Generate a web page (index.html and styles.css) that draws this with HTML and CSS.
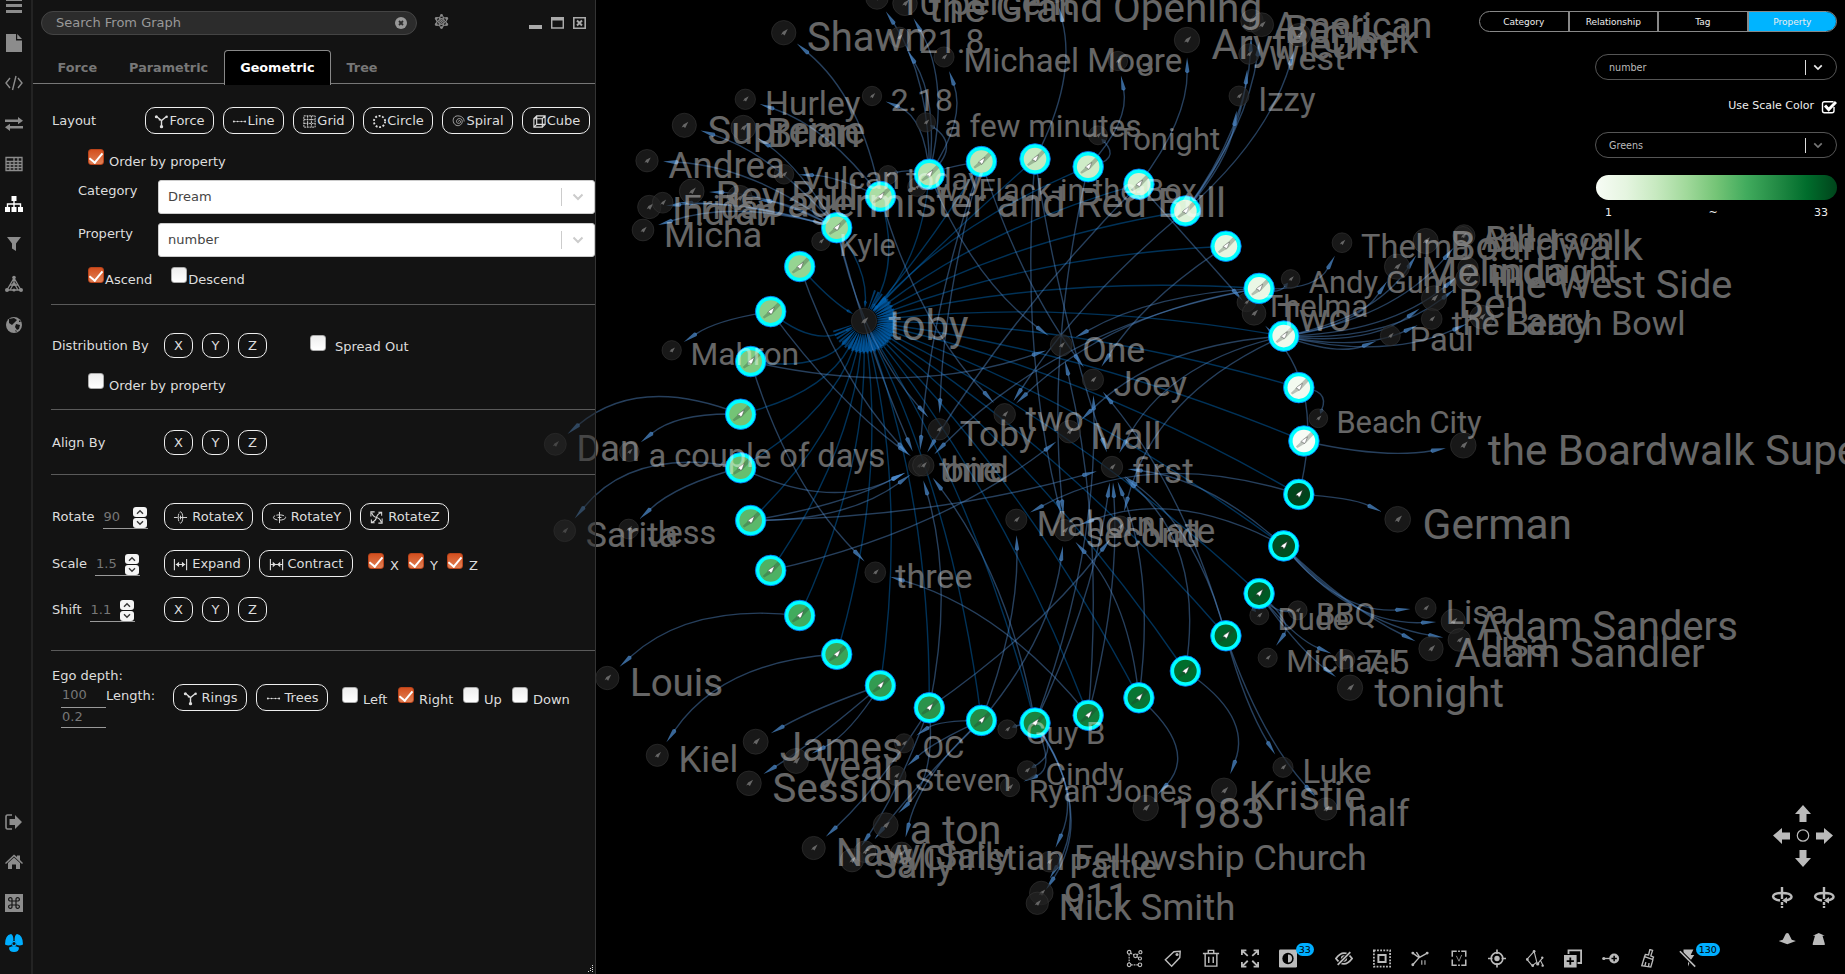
FILE: index.html
```html
<!DOCTYPE html>
<html lang="en">
<head>
<meta charset="utf-8">
<title>Graph layout</title>
<link rel="stylesheet" href="styles.css">
</head>
<body>
<svg class="defs" aria-hidden="true">
  <symbol id="i-force" viewBox="0 0 16 16"><path d="M3 3l5 4 5-4M8 7v6" fill="none" stroke="currentColor" stroke-width="1.5"/><circle cx="2.5" cy="3" r="1.6"/><circle cx="13.5" cy="3" r="1.3"/><circle cx="8" cy="13.5" r="1.8"/><circle cx="6" cy="6" r="1"/></symbol>
  <symbol id="i-line" viewBox="0 0 16 16"><path d="M1 8h14" stroke="currentColor" stroke-width=".6"/><circle cx="2" cy="8" r="1"/><circle cx="6" cy="8" r=".8"/><circle cx="10" cy="8" r=".8"/><circle cx="14" cy="8" r="1"/></symbol>
  <symbol id="i-grid" viewBox="0 0 16 16"><path d="M2 2h12v12H2zM6 2v12M10 2v12M2 6h12M2 10h12" fill="none" stroke="currentColor" stroke-width="1" stroke-dasharray="2 .8"/></symbol>
  <symbol id="i-circle" viewBox="0 0 16 16"><circle cx="8" cy="8" r="6" fill="none" stroke="currentColor" stroke-width="2" stroke-dasharray="2 1.8"/></symbol>
  <symbol id="i-spiral" viewBox="0 0 16 16"><path d="M8 8c0-2 3-1 2 1s-5 1-4-2 6-3 6 1-5 6-8 3-2-9 3-9 7 3 7 6" fill="none" stroke="currentColor" stroke-width=".9" opacity=".8"/></symbol>
  <symbol id="i-cube" viewBox="0 0 16 16"><path d="M2 5h9v9H2zM5 2h9v9H5zM2 5l3-3M11 5l3-3M2 14l3-3M11 14l3-3" fill="none" stroke="currentColor" stroke-width="1.2"/></symbol>
  <symbol id="i-rx" viewBox="0 0 16 16"><ellipse cx="8" cy="8" rx="2.4" ry="6" fill="none" stroke="currentColor" stroke-dasharray="8 1.5"/><path d="M1 8h4M7 8h8M8 6v4" stroke="currentColor"/></symbol>
  <symbol id="i-ry" viewBox="0 0 16 16"><ellipse cx="8" cy="8" rx="6.5" ry="2.8" fill="none" stroke="currentColor" stroke-dasharray="8 1.5"/><path d="M8 2v12M6 8h4" stroke="currentColor"/></symbol>
  <symbol id="i-rz" viewBox="0 0 16 16"><path d="M3 3q1 4 5 5t5 5M13 3q-4 1-5 5t-5 5M2 7V2h4M14 9v5h-4M10 2.5h3.5V6M6 13.5H2.5V10" fill="none" stroke="currentColor" stroke-width="1.1"/></symbol>
  <symbol id="i-expand" viewBox="0 0 16 16"><path d="M1.5 2v12M14.5 2v12M3 8h10" stroke="currentColor" stroke-width="1.2"/><path d="M3 8l3.5-3v6zM13 8L9.5 5v6z"/></symbol>
  <symbol id="i-contract" viewBox="0 0 16 16"><path d="M1.5 2v12M14.5 2v12M2 8h12" stroke="currentColor" stroke-width="1.2"/><path d="M7.5 8L4 5v6zM8.5 8L12 5v6z"/></symbol>
  <symbol id="i-chev" viewBox="0 0 12 8"><path d="M1.5 1.5L6 6l4.5-4.5" fill="none" stroke="currentColor" stroke-width="2"/></symbol>
</svg>

<svg class="graph" id="graph" width="1845" height="974" viewBox="0 0 1845 974"></svg>

<div class="app">
  <nav class="rail">
    <div class="rail-group">
      <svg viewBox="0 0 18 18"><path d="M1 1h16v3H1zM1 7h16v3H1zM1 13h16v3H1z"/></svg>
      <svg viewBox="0 0 18 18"><path d="M1 0h10v6.5h6V18H1zM12.2 0L17 5h-4.8z"/></svg>
      <svg viewBox="0 0 18 18"><path d="M5 4L1 9l4 5M13 4l4 5-4 5M11 2L7.5 16" fill="none" stroke="currentColor" stroke-width="1.4"/></svg>
      <svg viewBox="0 0 18 18"><path d="M0 4.5h13V2l5 3.7-5 3.6V7H0zM18 11H5V8.7L0 12.3 5 16v-2.5h13z"/></svg>
      <svg viewBox="0 0 18 18"><path d="M1 2.500h16v13H1zM1 6.500h16M1 9.500h16M1 12.500h16M5 6v9M9 3v12M13 3v12" fill="none" stroke="currentColor" stroke-width="1.3"/></svg>
      <svg class="active" viewBox="0 0 18 18"><path d="M6.5 1h5v5h-5zM0 12h5v5H0zM6.5 12h5v5h-5zM13 12h5v5h-5z"/><path d="M9 6v6M2.5 12V9h13v3" fill="none" stroke="currentColor" stroke-width="1.4"/></svg>
      <svg viewBox="0 0 18 18"><path d="M2 2h14l-5 6.500V16l-4-2.500v-5z"/></svg>
      <svg viewBox="0 0 18 18"><path d="M9 2v6M9 3L2 15h14L9 3M9 8l-4 7M9 8l4 7M5 10h8" fill="none" stroke="currentColor" stroke-width="1.3"/><circle cx="9" cy="2.5" r="1.8"/><circle cx="2" cy="15" r="2"/><circle cx="16" cy="15" r="2"/><circle cx="9" cy="9" r="1.8"/><circle cx="9" cy="15" r="1.6"/></svg>
      <svg viewBox="0 0 18 18"><circle cx="9" cy="9" r="8"/><path d="M4 3l5-1 3 2-3 3-2 2-3-2zM11 8l4 1-1 4-2 1-2-3zM14 4l2 2-2 0zM10 14l2 1-1 1z" fill="#141414"/></svg>
    </div>
    <div class="rail-group rail-bottom">
      <svg viewBox="0 0 18 18"><path d="M7 2H2.500Q1 2 1 4v10q0 2 1.500 2H7" fill="none" stroke="currentColor" stroke-width="1.6"/><path d="M4.500 6H10V2l7 7-7 7v-4H4.500z"/></svg>
      <svg viewBox="0 0 18 18"><path d="M9 4.500l6 5.500v6h-4v-4.500H7V16H3v-6zM0 10L9 1.500 12 4V2.500h3V7l3 3-1 1-8-7.500L1 11z"/></svg>
      <svg viewBox="0 0 18 18"><path d="M0 0h18v18H0z"/><path d="M7 7h4v4H7zM7 7V5.500A1.700 1.700 0 1 0 5.500 7zM11 7V5.500A1.700 1.700 0 1 1 12.500 7zM7 11v1.500A1.700 1.700 0 1 1 5.500 11zM11 11v1.500a1.700 1.700 0 1 0 1.500-1.500z" fill="none" stroke="#141414" stroke-width="1.2"/></svg>
      <svg class="brand" viewBox="0 0 18 18"><path d="M0 10.500Q0 1 6 0q2.400 1 2.400 6L6 11q-3 1-6-.500zM18 10.500Q18 1 12 0 9.600 1 9.600 6l2.400 5q3 1 6-.500zM4 13.500q5-3 10 0 0 4.500-5 4.500t-5-4.500z"/><circle cx="9" cy="9.500" r="2.200" fill="#141414" stroke="currentColor" stroke-width="1.2"/></svg>
    </div>
  </nav>

  <section class="panel">
    <header class="panel-head">
      <div class="search"><span>Search From Graph</span><svg viewBox="0 0 12 12"><circle cx="6" cy="6" r="6"/><path d="M4 4l4 4M8 4l-4 4" stroke="#2c2c2c" stroke-width="1.8"/></svg></div>
      <svg class="atom" viewBox="0 0 16 16"><g fill="none" stroke="currentColor" stroke-width="1.1"><ellipse cx="8" cy="8" rx="2.6" ry="6.5"/><ellipse cx="8" cy="8" rx="2.6" ry="6.5" transform="rotate(60 8 8)"/><ellipse cx="8" cy="8" rx="2.6" ry="6.5" transform="rotate(120 8 8)"/><circle cx="8" cy="8" r="1"/></g><circle cx="8" cy="1.5" r="1.5"/><circle cx="8" cy="14.5" r="1.5"/><circle cx="2.4" cy="4.8" r="1.5"/><circle cx="13.6" cy="4.8" r="1.5"/><circle cx="2.4" cy="11.2" r="1.5"/><circle cx="13.6" cy="11.2" r="1.5"/></svg>
      <div class="win">
        <svg viewBox="0 0 13 12"><path d="M0 8h13v4H0z"/></svg>
        <svg viewBox="0 0 13 12"><path d="M.7 1h11.6v10H.7z" fill="none" stroke="currentColor" stroke-width="1.5"/><path d="M0 0h13v3.500H0z"/></svg>
        <svg viewBox="0 0 13 12"><path d="M.8.8h11.4v10.4H.8z" fill="none" stroke="currentColor" stroke-width="1.6"/><path d="M4 3.500l5 5M9 3.500l-5 5" stroke="currentColor" stroke-width="2"/></svg>
      </div>
    </header>
    <div class="tabs"><span>Force</span><span>Parametric</span><span class="on">Geometric</span><span>Tree</span></div>

    <div class="body">
      <div class="row row-layout">
        <span class="lbl">Layout</span>
        <div class="btns">
          <button class="w69"><svg><use href="#i-force"/></svg>Force</button>
          <button class="w61"><svg><use href="#i-line"/></svg>Line</button>
          <button class="w61"><svg><use href="#i-grid"/></svg>Grid</button>
          <button class="w70"><svg><use href="#i-circle"/></svg>Circle</button>
          <button class="w71"><svg><use href="#i-spiral"/></svg>Spiral</button>
          <button class="w68"><svg><use href="#i-cube"/></svg>Cube</button>
        </div>
      </div>
      <div class="row row-order"><i class="cb on"></i><span>Order by property</span></div>
      <div class="field"><label>Category</label><div class="select">Dream<b></b><svg><use href="#i-chev"/></svg></div></div>
      <div class="field second"><label>Property</label><div class="select">number<b></b><svg><use href="#i-chev"/></svg></div></div>
      <div class="row row-asc"><i class="cb on"></i><span>Ascend</span><i class="cb"></i><span>Descend</span></div>
      <hr>
      <div class="row row-dist"><span class="lbl">Distribution By</span><div class="btns xyz"><button>X</button><button>Y</button><button>Z</button></div><i class="cb"></i><span class="spread">Spread Out</span></div>
      <div class="row row-order two"><i class="cb"></i><span>Order by property</span></div>
      <hr>
      <div class="row row-align"><span class="lbl">Align By</span><div class="btns xyz"><button>X</button><button>Y</button><button>Z</button></div></div>
      <hr>
      <div class="row row-rot">
        <div class="lead"><span>Rotate</span><div class="num">90<em><svg><use href="#i-chev"/></svg><svg><use href="#i-chev"/></svg></em></div></div>
        <div class="btns wide"><button class="w89"><svg><use href="#i-rx"/></svg>RotateX</button><button class="w89"><svg><use href="#i-ry"/></svg>RotateY</button><button class="w89"><svg><use href="#i-rz"/></svg>RotateZ</button></div>
      </div>
      <div class="row row-scale">
        <div class="lead"><span>Scale</span><div class="num">1.5<em><svg><use href="#i-chev"/></svg><svg><use href="#i-chev"/></svg></em></div></div>
        <div class="btns wide"><button class="w86"><svg><use href="#i-expand"/></svg>Expand</button><button class="w94"><svg><use href="#i-contract"/></svg>Contract</button></div>
        <div class="axes"><i class="cb on"></i><span>X</span><i class="cb on"></i><span>Y</span><i class="cb on"></i><span>Z</span></div>
      </div>
      <div class="row row-shift">
        <div class="lead"><span>Shift</span><div class="num">1.1<em><svg><use href="#i-chev"/></svg><svg><use href="#i-chev"/></svg></em></div></div>
        <div class="btns xyz"><button>X</button><button>Y</button><button>Z</button></div>
      </div>
      <hr>
      <div class="ego">
        <div class="ego-title">Ego depth:</div>
        <div class="ego-row">
          <div class="ego-num">100</div><span class="ego-len">Length:</span>
          <div class="btns wide"><button class="w74"><svg><use href="#i-force"/></svg>Rings</button><button class="w72"><svg><use href="#i-line"/></svg>Trees</button></div>
          <div class="dirs"><i class="cb"></i><span class="d1">Left</span><i class="cb on"></i><span class="d2">Right</span><i class="cb"></i><span class="d3">Up</span><i class="cb"></i><span>Down</span></div>
        </div>
        <div class="ego-num last">0.2</div>
      </div>
    </div>
    <svg class="grip" viewBox="0 0 7 7"><path d="M5 0h1v1H5zM5 2h1v1H5zM5 4h1v1H5zM5 6h1v1H5zM3 3h1v1H3zM3 5h1v1H3zM1 6h1v1H1z"/></svg>
  </section>

  <aside class="legend">
    <div class="seg"><span>Category</span><span>Relationship</span><span>Tag</span><span class="on">Property</span></div>
    <div class="pill bright">number<b></b><svg><use href="#i-chev"/></svg></div>
    <div class="scale-row"><span>Use Scale Color</span><svg viewBox="0 0 16 16"><path d="M12.5 2.700H3.500Q1.500 2.700 1.500 4.700v7q0 2 2 2h7.500q2 0 2-2V8" fill="none" stroke="#fff" stroke-width="1.4"/><path d="M4 6.500l3.700 4L15 3" fill="none" stroke="#fff" stroke-width="3"/></svg></div>
    <div class="pill">Greens<b></b><svg><use href="#i-chev"/></svg></div>
    <div class="gradient"></div>
    <div class="range"><span>1</span><span>~</span><span>33</span></div>
  </aside>

  <div class="pad">
    <svg viewBox="0 0 64 76"><path d="M32 0l8 9h-4.500v8h-7V9H24zM32 62l8-9h-4.500v-8h-7v8H24zM2 30.500L11 23v4.500h8v7h-8V39zM62 30.500L53 23v4.500h-8v7h8V39z"/><circle cx="32" cy="30.5" r="5.7" fill="none" stroke="currentColor" stroke-width="1.2"/></svg>
    <svg viewBox="0 0 64 24"><g id="orb"><path d="M11 1v12M11 16v3M11 20v2" stroke="currentColor" stroke-width="2.4"/><path d="M9 14.500C-1 13 0 7 11 7s13 6 3 7.500" fill="none" stroke="currentColor" stroke-width="2.4"/><path d="M16 11l-5 3.500 5 3z"/></g><use href="#orb" x="42"/></svg>
    <svg viewBox="0 0 64 16"><path d="M11 0q2 0 3 3l3 6 5.500 1.500L11 15-.5 10.500 5 9l3-6q1-3 3-3zM53 0l8 3.500h-3L61 14v2H45v-2l3-10.500h-3z"/></svg>
  </div>

  <div class="tools">
    <svg viewBox="0 0 20 20"><g fill="none" stroke="currentColor" stroke-width="1.3"><circle cx="3.500" cy="3" r="2"/><circle cx="3.500" cy="17" r="2"/><circle cx="15.500" cy="17" r="2"/><circle cx="16" cy="3" r="1.7"/><circle cx="10.500" cy="7" r="2"/><circle cx="15.500" cy="10" r="1.7"/><path d="M3.500 5v10M5.500 17h8M5 4l4 2M12 6l3-2M12 8l2 1" stroke-dasharray="2 1"/></g></svg>
    <svg viewBox="0 0 20 20"><path d="M1.500 11.500L11 2.500l7-.500-.500 7-9 9.500z" fill="none" stroke="currentColor" stroke-width="1.6"/><circle cx="14.500" cy="5.500" r="1.7"/></svg>
    <svg viewBox="0 0 20 20"><path d="M1 4.500h18M3.500 5v13.500h13V5M7 4V1h6v3M7.500 8v7M12.500 8v7" fill="none" stroke="currentColor" stroke-width="1.6"/></svg>
    <svg viewBox="0 0 20 20"><path d="M1 6V1h5M14 1h5v5M19 14v5h-5M6 19H1v-5M1.500 1.500L7.500 7M18.500 1.500L12.500 7M1.500 18.500l6-6M18.500 18.500l-6-6" fill="none" stroke="currentColor" stroke-width="2"/></svg>
    <div class="with-badge"><svg viewBox="0 0 20 20"><rect width="20" height="20" rx="1.5"/><circle cx="10" cy="10" r="6.3" fill="#000"/><path d="M10 5.500a4.500 4.500 0 0 1 0 9z"/></svg><span class="badge">33</span></div>
    <svg class="gap" viewBox="0 0 20 20"><path d="M1 10q9-12 18 0-9 12-18 0z" fill="none" stroke="currentColor" stroke-width="2"/><circle cx="10" cy="10" r="3.5"/><path d="M3 17L17 3" stroke="#000" stroke-width="4"/><path d="M3 17L17 3" stroke="currentColor" stroke-width="2"/></svg>
    <svg viewBox="0 0 20 20"><path d="M1 1h18v18H1z" fill="none" stroke="currentColor" stroke-width="2" stroke-dasharray="2 1.5"/><path d="M6 6h8v8H6z" fill="none" stroke="currentColor" stroke-width="2.2"/></svg>
    <svg viewBox="0 0 20 20"><path d="M2 4l7 5 9-5M9 9l-7 8M6 3l4 6" fill="none" stroke="currentColor" stroke-width="1.5"/><circle cx="2" cy="4" r="1.6"/><circle cx="18" cy="4" r="1.6"/><circle cx="2" cy="17" r="1.6"/><path d="M12 12v5M15.500 12v5" stroke="currentColor" stroke-width="1.2"/></svg>
    <svg viewBox="0 0 20 20"><path d="M7.500 2H2.500v6M2.500 11v6.500H7.500M12.500 2h5v6M17.500 11v6.500H12.500M9 17.500h2M9 2h2" fill="none" stroke="currentColor" stroke-width="1.7"/><path d="M7 7l3 6 3-7" fill="none" stroke="currentColor" stroke-width=".8"/></svg>
    <svg viewBox="0 0 20 20"><circle cx="10" cy="10" r="6.5" fill="none" stroke="currentColor" stroke-width="1.8"/><circle cx="10" cy="10" r="3"/><path d="M10 0v5M10 15v5M0 10h5M15 10h5" stroke="currentColor" stroke-width="1.8"/></svg>
    <svg viewBox="0 0 20 20"><path d="M1 11L9 2l3 12-5 4z" fill="none" stroke="currentColor" stroke-width="1.2"/><circle cx="9" cy="2" r="1.5"/><circle cx="1.500" cy="11" r="1.5"/><circle cx="7.500" cy="18" r="1.5"/><path d="M13 16l3-4 3-3M16 12l3 6" stroke="currentColor" stroke-width="1.2"/><circle cx="13" cy="16" r="1.8"/><circle cx="18" cy="9" r="1.3"/><circle cx="18.500" cy="18" r="1.3"/></svg>
    <svg viewBox="0 0 20 20"><path d="M5 5V1h14v14h-4" fill="none" stroke="currentColor" stroke-width="2"/><path d="M0 6h14v14H0zM6 9v3H3v2h3v3h2v-3h3v-2H8V9z" fill-rule="evenodd"/></svg>
    <svg viewBox="0 0 20 20"><circle cx="13.500" cy="10" r="5.5"/><path d="M2 10h7" stroke="currentColor" stroke-width="1.5"/><circle cx="2" cy="10" r="1.8"/><path d="M13.500 7v6M10.500 10h6" stroke="#000" stroke-width="1.7"/></svg>
    <svg viewBox="0 0 20 20"><path d="M14 1l-2 6 3 1.500-1 2.500-9-3 1-2.500 3.500.5L11 0zM5 8L2 18l10 1.500 2.500-8.500M6.500 14l-1 4M10 15l-.5 4" fill="none" stroke="currentColor" stroke-width="1.5"/></svg>
    <div class="with-badge"><svg viewBox="0 0 20 20"><path d="M5 0h11l-3 6h4l-4 6-3 7v-8L5 6z"/><path d="M1 2l17 17" stroke="#000" stroke-width="4"/><path d="M1 2l17 17" stroke="currentColor" stroke-width="1.8"/></svg><span class="badge">130</span></div>
  </div>
</div>
<script src="graph.js"></script>
</body>
</html>
```
FILE: styles.css
```css
* { box-sizing: border-box; }
body { margin: 0; background: #000; color: #ddd; font: 13px/16px "DejaVu Sans", sans-serif; overflow: hidden; width: 1845px; height: 974px; position: relative; }
svg { fill: currentColor; flex: none; display: block; }
.defs { position: absolute; width: 0; height: 0; }
.graph { position: absolute; left: 0; top: 0; }
.graph text { font-family: Roboto, sans-serif; }
.app { position: relative; display: flex; height: 974px; }

.rail { width: 33px; background: rgba(38,38,38,.5); border-right: 2px solid #232323; display: flex; flex-direction: column; justify-content: space-between; color: #8c8c8c; }
.rail-group { display: flex; flex-direction: column; align-items: center; gap: 22.2px; margin-top: -3px; width: 28px; }
.rail-group svg { width: 18px; height: 18px; }
.rail-group:first-child svg:first-child { margin-bottom: -3px; }
.rail-bottom { gap: 22.5px; margin-bottom: 22px; }
.rail .active { color: #fff; }
.rail .brand { color: #00aeff; }

.panel { width: 563px; background: rgba(38,38,38,.5); border-right: 1px solid #333; position: relative; }
.panel-head { display: flex; align-items: center; height: 45px; padding-left: 8px; }
.search { width: 376px; height: 24px; border: 1px solid #444; border-radius: 12px; background: #2c2c2c; color: #999; display: flex; align-items: center; justify-content: space-between; padding: 1px 9px 0 14px; }
.search svg { width: 12px; height: 12px; }
.atom { width: 15px; height: 15px; margin: 0 0 2px 17px; color: #888; }
.win { display: flex; gap: 9px; margin-left: 80px; color: #aaa; }
.win svg { width: 13px; height: 12px; }
.tabs { height: 39px; padding: 5px 0 0 8.5px; display: flex; border-bottom: 1px solid #777; font-weight: bold; font-size: 12.8px; color: #777; }
.tabs span { height: 35px; padding: 9px 15px; border: 1px solid transparent; border-bottom: 0; }
.tabs .on { background: #000; color: #fff; border-color: #888; border-radius: 4px 4px 0 0; }

.body { padding-left: 18px; }
.body hr { border: 0; height: 1px; background: #5a5a5a; margin: 0; }
.row { display: flex; align-items: center; }
.lbl { width: 113px; padding-left: 1px; }
.btns { display: flex; gap: 9px; }
button { font: inherit; color: #ddd; background: none; border: 1px solid #eee; border-radius: 10px; height: 27px; padding: 1px 0 0; display: flex; align-items: center; justify-content: center; }
button svg { width: 15px; height: 15px; }
.wide button { gap: 4px; }
.xyz button { height: 25px; width: 29px; }
.xyz button:nth-child(2) { width: 27px; }
.w61 { width: 61px; } .w68 { width: 68px; } .w69 { width: 69px; } .w70 { width: 70px; } .w71 { width: 71px; }
.w72 { width: 72px; } .w74 { width: 74px; } .w86 { width: 86px; } .w89 { width: 89px; } .w94 { width: 94px; }
.row-layout { margin-top: 23px; height: 27px; }
.row-layout .lbl { width: 94px; }
.cb { flex: none; width: 16px; height: 16px; border-radius: 3px; background: linear-gradient(#ededed, #fff); border: 1px solid #aaa; margin-bottom: 5px; display: block; }
.cb.on { background: linear-gradient(#d4501f, #e08055); border-color: #b9441b; display: grid; place-items: center; }
.cb.on::after { content: ""; width: 6px; height: 11px; border: solid #fff; border-width: 0 2px 2px 0; transform: translateY(-1px) rotate(40deg); }
.row-order { padding-left: 37px; gap: 5px; margin-top: 15px; height: 21px; }
.row-order span { padding-top: 4px; }
.field { display: flex; margin-top: 10px; padding-left: 27px; height: 34px; }
.field label { width: 80px; padding-top: 3px; }
.field.second { margin-top: 9px; }
.select { flex: 1; background: #fff; color: #444; border: 1px solid #ccc; border-radius: 3px; display: flex; align-items: center; padding-left: 9px; }
.select b { width: 1px; height: 18px; background: #ccc; margin-left: auto; }
.select svg { width: 12px; height: 8px; margin: 0 10px; color: #ccc; }
.row-asc { padding-left: 37px; margin-top: 10px; height: 21px; }
.row-asc span { padding: 4px 19px 0 1px; }
.row-asc + hr { margin-top: 16px; }
.row-dist { height: 25px; margin-top: 28px; }
.row-dist .cb { margin-left: 43px; }
.spread { padding: 3px 0 0 9px; }
.row-order.two { margin-top: 15px; }
.row-order.two + hr { margin-top: 15px; }
.row-align { height: 25px; margin-top: 20px; }
.row-align + hr { margin-top: 19px; }
.lead { width: 113px; display: flex; padding-left: 1px; gap: 9px; align-items: center; }
.num { width: 45px; height: 24px; border-bottom: 1px solid #999; color: #777; padding: 4px 1px 0; display: flex; justify-content: space-between; }
.num em { width: 14px; height: 21px; display: flex; flex-direction: column; gap: 1px; margin-top: -2px; }
.num em svg { width: 14px; height: 10px; background: #f4f4f4; border-radius: 3px; padding: 2px 3px; color: #333; }
.num em svg:first-child { transform: scaleY(-1); }
.row-rot { height: 27px; margin-top: 28px; }
.row-rot .num, .row-scale .num, .row-shift .num { margin-left: -1px; }
.row-scale { height: 27px; margin-top: 20px; }
.row-shift { height: 25px; margin-top: 20px; }
.row-shift + hr { margin-top: 28px; }
.axes, .dirs { display: flex; align-items: center; }
.axes { padding-left: 15px; }
.axes span { width: 24px; padding: 5px 0 0 6px; }
.axes span:nth-of-type(2) { width: 23px; }
.ego { padding-top: 17px; }
.ego-title { padding-left: 1px; }
.ego-row { display: flex; height: 27px; align-items: center; }
.ego-num { width: 45px; height: 24px; margin-left: 10px; border-bottom: 1px solid #999; color: #777; padding: 3px 1px 0; }
.ego-num.last { height: 21px; margin-top: -4px; padding-top: 2px; }
.ego-row .ego-num { margin-top: -3px; }
.ego-len { width: 67px; margin-top: -3px; }
.dirs { padding-left: 14px; }
.dirs span { padding: 5px 0 0 5px; }
.d1 { width: 40px; } .d2 { width: 49px; } .d3 { width: 33px; }
.grip { position: absolute; right: 1px; bottom: 2px; width: 7px; height: 7px; }

.legend { margin: 11px 8px 0 auto; display: flex; flex-direction: column; align-items: flex-end; height: 210px; color: #eee; }
.seg { display: flex; width: 358px; height: 21px; border: 1px solid #888; border-radius: 11px; overflow: hidden; font-size: 9px; line-height: 21px; text-align: center; }
.seg span { flex: 1; border-right: 2px solid #888; }
.seg .on { background: #00b4ff; border: 0; }
.pill { width: 242px; height: 26px; border: 1px solid #555; border-radius: 13px; display: flex; align-items: center; padding: 1px 0 0 13px; font-size: 9.6px; color: #bbb; }
.pill.bright { margin-top: 22px; }
.pill b { width: 1px; height: 15px; background: #ddd; margin-left: auto; }
.pill svg { width: 10px; height: 7px; margin: 0 13px 0 7px; color: #777; }
.pill.bright svg { color: #eee; }
.scale-row { display: flex; align-items: center; height: 16px; margin: 18px 0; font-size: 11px; gap: 7px; }
.scale-row svg { width: 16px; height: 16px; margin-top: 2px; }
.gradient { width: 241px; height: 25px; border-radius: 12.5px; margin-top: 17px; background: linear-gradient(90deg,#f7fcf5,#e5f5e0,#c7e9c0,#a1d99b,#74c476,#41ab5d,#238b45,#006d2c,#00441b); }
.range { width: 241px; padding: 5px 9px 0; display: flex; justify-content: space-between; font-size: 11px; }

.pad { position: absolute; right: 10px; top: 805px; width: 64px; display: flex; flex-direction: column; color: #bbb; }
.pad svg { width: 64px; }
.pad svg:nth-child(1) { height: 76px; }
.pad svg:nth-child(2) { height: 24px; margin-top: 5px; }
.pad svg:nth-child(3) { height: 12px; margin-top: 23px; }
.pad svg:nth-child(3) { width: 64px; }
.tools { position: absolute; left: 1126px; top: 949px; display: flex; gap: 20.2px; color: #bbb; }
.tools svg { width: 18px; height: 19px; }
.with-badge { position: relative; }
.gap { margin-left: 18px; }
.badge { position: absolute; left: 17px; top: -6px; background: #00aeff; color: #000; border-radius: 7px; font-size: 9.5px; line-height: 13px; padding: 0 3px; }
```
FILE: graph.js
```js
const svg = document.getElementById('graph');
const CX = 1021.6, CY = 441, R = 282.3, N = 33;
const ring = [...Array(N)].map((_, i) => {
  const a = -i * 2 * Math.PI / N;
  return [CX + R * Math.cos(a), CY + R * Math.sin(a)];
});

// id: [x, y, label size, label]
const nodes = {
  shawn: [783.7, 32.7, 39.9, 'Shawn'], hurley: [745.3, 99.3, 33.6, 'Hurley'],
  supreme: [684.3, 125.3, 39.7, 'Supreme'], brian: [743.3, 127.7, 40.6, 'Brian'],
  andrea: [647, 160.7, 36.7, 'Andrea'], rey: [691.7, 191.3, 40.5, 'Rey Bull'],
  jager: [739.6, 198, 41.5, 'Jagermister and Red Bull'],
  indian: [649.3, 207, 38.5, 'Indian'], friday: [662.7, 202.7, 34, 'Friday'],
  micha: [643, 230, 35.9, 'Micha'], kyle: [821, 241.3, 30.6, 'Kyle'],
  vulcan: [784, 174.3, 32, 'Vulcan'], today: [888, 175, 31.2, 'today'],
  jack: [917, 187, 30.8, 'w/ Flack-in-the-Box'],
  v218: [872, 96, 31.9, '2.18'], v21: [899.3, 37.3, 33.6, '21.8'],
  moore: [944, 57, 33, 'Michael Moore'], few: [926, 122.3, 31.5, 'a few minutes'],
  ten: [877, -2, 37, '10 percent'], opening: [905, 3.3, 40.4, 'the Grand Opening'],
  top: [1055, -8, 35, ''], n3: [1118, 61, 31.8, '3'],
  ary: [1187, 40, 41.6, 'Arytheum'], american: [1252, 20.7, 37.2, 'American'],
  benji: [1261.7, 24.7, 39, 'Benji'], creek: [1299, 35, 38, 'Creek'],
  west: [1249, 54, 33.9, 'West'], izzy: [1239, 96, 32.9, 'Izzy'],
  tonight1: [1098, 135.3, 31, 'Tonight'], thelma1: [1342, 242.7, 32.5, 'Thelma'],
  andy: [1290.7, 279, 30.9, 'Andy Gunn'], thelma2: [1246.5, 302.3, 31, 'Thelma'],
  Two: [1254, 313.3, 39, 'Two'], mahron: [671.7, 350.3, 31.8, 'Mahron'],
  dan: [555.3, 444.3, 36.2, 'Dan'], couple: [629.3, 451.7, 32.6, 'a couple of days'],
  sarita: [564.7, 530.7, 35.7, 'Sarita'], jess: [628.7, 529, 32.4, 'Jess'],
  third: [919, 465.7, 34.5, 'third'], one2: [923.3, 465.3, 35, 'one'],
  Toby: [939, 429.3, 35.3, 'Toby'], two: [1004.7, 414.3, 35.3, 'two'],
  mall: [1069.3, 431.7, 37, 'Mall'], one: [1061.3, 345.3, 35.6, 'One'],
  joey: [1093, 379.7, 34.7, 'Joey'], first: [1112, 467, 35.2, 'first'],
  mahorn: [1016.3, 519.7, 34.8, 'Mahorn'], second: [1065, 530.3, 35.3, 'second'],
  nate: [1120, 526.7, 35.3, 'Nate'], beach: [1318.3, 418.3, 30.8, 'Beach City'],
  super: [1463.3, 445.3, 42.1, 'the Boardwalk Superstore'],
  german: [1397.7, 519.3, 42.4, 'German'], dude: [1259.3, 615.3, 31, 'Dude'],
  bbq: [1297.7, 610.3, 31, 'BBQ'], lisa: [1425.7, 608, 34, 'Lisa'],
  sanders: [1453.3, 621.3, 40, 'Adam Sanders'], lisa2: [1459.3, 640, 37, 'Lisa'],
  sandler: [1431, 648.7, 40, 'Adam Sandler'], michael: [1267.7, 657.7, 31.5, 'Michael'],
  v75: [1345, 659.3, 32.5, '7.5'], tonight: [1350, 687.7, 41.5, 'tonight'],
  luke: [1283, 767.3, 33, 'Luke'], kristie: [1224, 790.7, 41.5, 'Kristie'],
  half: [1326, 809, 36.6, 'half'], y1983: [1145.7, 808, 42, '1983'],
  cindy: [1027, 770.3, 31.5, 'Cindy'], ryan: [1010, 787, 31.9, 'Ryan Jones'],
  guy: [1007.3, 729.3, 31, 'Guy B'], pattie: [1049.3, 861.7, 33.9, 'Pattie'],
  n911: [1041.3, 893, 38.6, '911'], nick: [1037.3, 903.3, 36.6, 'Nick Smith'],
  church: [901.7, 853, 35.9, 'Christian Fellowship Church'],
  louis: [607.3, 678, 38.5, 'Louis'], kiel: [657.3, 755.3, 36.3, 'Kiel'],
  james: [755.7, 741.7, 40.9, 'James'], year: [796, 761, 41, 'year'],
  session: [749, 783.3, 40.2, 'Session'], oc: [904, 743.3, 31.4, 'OC'],
  steven: [896.3, 775.7, 32, 'Steven'], aton: [885.7, 825.3, 41, 'a ton'],
  navy: [813.7, 848, 38, 'Navy'], sally: [852, 860.3, 38, 'Sally'],
  wsally: [865, 851.7, 35.5, 'w/ Sally'], three: [875.3, 572.3, 34, 'three'],
  boardwalk: [1425.7, 241, 41.3, 'Boardwalk'], bill: [1464, 235.7, 36, 'Bill'],
  anderson: [1463, 236, 31, 'Anderson'],
  melinda: [1397, 266.7, 41.4, 'Melinda'], midnight: [1468, 267.7, 33.3, 'midnight'],
  westside: [1467.7, 279, 39.7, 'the West Side'], ben: [1434, 298.3, 41.2, 'Ben'],
  bowl: [1431.7, 319, 34.1, 'the Beach Bowl'], larry: [1481.7, 317, 38.6, 'Larry'],
  paul: [1390.3, 335.7, 32.7, 'Paul'], toby: [864, 321, 41.7, 'toby']
};

// ring index: "target:bend ..."
const links = {
  0: 'super:16', 1: 'beach:-26',
  2: 'paul:20 melinda:30 boardwalk:36 bill:38 ben:30 midnight:34 westside:36 bowl:24 larry:34 mall:44 nate:60 first:50',
  3: 'thelma1:30 andy:12 one:24 two:44 one2:60',
  4: 'joey:20', 5: 'izzy:18 west:24 american:30 benji:26 creek:30 two:20',
  6: 'ary:26 Two:0 third:20', 7: 'n3:28 tonight1:30 second:30', 8: 'top:32 second:30 first:14',
  9: 'jack:8 Toby:16 third:20 joey:20',
  10: 'ten:28 opening:34 v21:24 moore:30 few:34 v218:30 today:6 one:30',
  11: 'shawn:34 hurley:26 vulcan:10 two:30', 12: 'supreme:26 brian:14 andrea:30 rey:16 indian:18 friday:12 micha:30 jager:10 Toby:30 third:10',
  13: 'third:24', 14: 'mahron:12 one2:16', 15: 'three:30 one:44', 16: 'dan:56 couple:22',
  17: 'sarita:56 jess:16 third:44', 18: 'one2:30 third:14 first:24', 19: 'mall:36',
  20: 'louis:46', 21: 'kiel:50', 22: 'james:6 session:-6 year:-16',
  23: 'navy:-12 sally:-10 aton:-30 third:30 nate:20', 24: 'oc:12 steven:8 wsally:6 church:24 mahorn:20 second:30',
  25: 'guy:2 cindy:-30 ryan:-36 pattie:-40 n911:-54 nick:-60 first:20 joey:34 one2:34',
  26: 'one:30 three:40 first:20', 27: 'y1983:-56 first:30 second:30', 28: 'kristie:-50 first:60',
  29: 'luke:10 half:20 joey:30 first:36', 30: 'dude:10 bbq:12 michael:-30 v75:14 tonight:10',
  31: 'lisa:40 sanders:46 lisa2:34 sandler:14 first:30 second:50',
  32: 'german:-10 mahorn:60 Two:50'
};

const greens = ['#f7fcf5', '#e5f5e0', '#c7e9c0', '#a1d99b', '#74c476', '#41ab5d', '#238b45', '#006d2c', '#00441b']
  .map(h => [1, 3, 5].map(k => parseInt(h.slice(k, k + 2), 16)));
const shade = t => {
  const p = Math.min(t * 8, 7.999), k = Math.floor(p), f = p - k;
  return 'rgb(' + greens[k].map((c, j) => Math.round(c + (greens[k + 1][j] - c) * f)) + ')';
};

// Quadratic curve from a to b, bent sideways by `bend` px, ending in a cone.
function curve(a, b, bend, gap, len, half, [line, cone]) {
  const dx = b[0] - a[0], dy = b[1] - a[1], d = Math.hypot(dx, dy);
  const c = [(a[0] + b[0]) / 2 - dy / d * bend, (a[1] + b[1]) / 2 + dx / d * bend];
  const q = Math.hypot(b[0] - c[0], b[1] - c[1]);
  const u = [(b[0] - c[0]) / q, (b[1] - c[1]) / q];
  const tip = [b[0] - u[0] * gap, b[1] - u[1] * gap];
  const base = [tip[0] - u[0] * len, tip[1] - u[1] * len];
  const e = [-u[1] * half, u[0] * half];
  const f = v => v.toFixed(1);
  return `<path d="M${f(a[0])} ${f(a[1])}Q${f(c[0])} ${f(c[1])} ${f(base[0])} ${f(base[1])}" fill="none" stroke="${line}" stroke-width="1.4"/>` +
    `<path d="M${f(tip[0])} ${f(tip[1])}L${f(base[0] + e[0])} ${f(base[1] + e[1])}Q${f(base[0] - u[0] * 3)} ${f(base[1] - u[1] * 3)} ${f(base[0] - e[0])} ${f(base[1] - e[1])}Z" fill="${cone}"/>`;
}

let edges = '', dots = '', labels = '', sel = '';
ring.forEach((p, i) => {
  const bend = i < 8 ? 29 : i === 8 ? 4 : i === 9 ? -8 : i < 12 ? -28 : i === 12 ? -18 : i === 13 ? 6 : i < 16 ? 32 : 34;
  const upper = i > 8 && i < 15;
  edges += curve(p, nodes.toby, bend, 13, upper ? 6 : 17, upper ? 1.5 : 2.3, ['rgba(0,100,175,.5)', 'rgba(0,105,190,.6)']);
});
// Fan of incoming cones packed round the hub.
const hub = deg => [864 + 23 * Math.cos(deg * Math.PI / 180), 321 + 23 * Math.sin(deg * Math.PI / 180)].map(v => v.toFixed(1)).join(' ');
edges += `<path d="M${hub(-72)}A23 23 0 1 1 ${hub(165)}" fill="none" stroke="rgba(0,95,175,.6)" stroke-width="19" stroke-dasharray="1.5 1.3"/>`;
for (const [i, list] of Object.entries(links)) {
  for (const item of list.split(' ')) {
    const [id, bend] = item.split(':');
    const n = nodes[id];
    const r = n[2] * 0.303, d = Math.hypot(n[0] - ring[i][0], n[1] - ring[i][1]);
    edges += curve(ring[i], n, +bend, d < 60 ? r * .5 : r + 5, d < 60 ? 4 : 14, 2.2, ['rgba(85,140,205,.45)', 'rgba(80,145,215,.7)']);
  }
}
for (const [x, y, s, t] of Object.values(nodes)) {
  dots += `<circle cx="${x}" cy="${y}" r="${(s * .305).toFixed(1)}" fill="rgba(34,34,34,.7)" stroke="rgba(60,60,60,.5)"/>` +
    `<path transform="translate(${x} ${y}) scale(${(s / 44).toFixed(2)})" d="M4.5-4L1 3-1 1.5-3 2.5-1-1z" fill="#666"/>`;
  if (t) labels += `<text x="${(x + s * .587).toFixed(1)}" y="${(y + s * .465).toFixed(1)}" font-size="${s}">${t}</text>`;
}
ring.forEach(([x, y], i) => {
  sel += `<g transform="translate(${x.toFixed(1)} ${y.toFixed(1)})"><circle r="15.3" fill="#0ff" stroke="#0070ff" stroke-width=".8"/>` +
    `<circle r="11.3" fill="${shade(i / 32)}"/><path d="M0-2L7-9l3 2.5L2 2-6.500 7-8 5.500z" fill="rgba(40,50,40,.28)"/>` +
    `<path d="M3.6-4.2L1.8.8.2 3-.8 1.2-3 .8-1.2-1.2z" fill="#fff" stroke="rgba(60,60,60,.6)" stroke-width=".7"/></g>`;
});
svg.innerHTML = `<g>${edges}</g><g>${dots}</g><g>${sel}</g><g fill="#fff" opacity=".4">${labels}</g>`;
```
